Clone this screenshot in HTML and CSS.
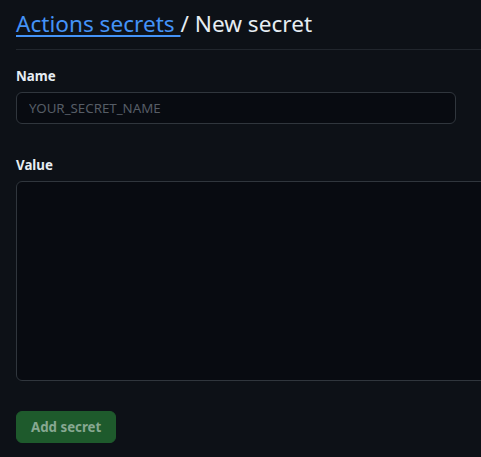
FILE: index.html
```html
<!DOCTYPE html>
<html>
<head>
<meta charset="utf-8">
<link rel="stylesheet" href="styles.css">
</head>
<body>
<div class="page">
  <div class="header">
    <h2 class="title"><a class="crumb" href="#">Actions secrets </a>/ New secret</h2>
  </div>
  <form class="form">
    <div class="field">
      <label class="label">Name</label>
      <input class="input" type="text" placeholder="YOUR_SECRET_NAME">
    </div>
    <div class="field field-value">
      <label class="label">Value</label>
      <div class="clip">
        <textarea class="textarea"></textarea>
      </div>
    </div>
    <button class="btn" type="button">Add secret</button>
  </form>
</div>
</body>
</html>
```
FILE: styles.css
```css
html, body {
  margin: 0;
  padding: 0;
  background: #0d1117;
}
body {
  font-family: "Noto Sans", "Liberation Sans", sans-serif;
  color: #e6edf3;
  width: 481px;
  height: 457px;
  overflow: hidden;
}
.page {
  padding-left: 16px;
  box-sizing: border-box;
  width: 481px;
}
.header {
  border-bottom: 1px solid #21262d;
  padding-top: 6px;
  padding-bottom: 7px;
}
.title {
  margin: 0;
  font-size: 22.6px;
  font-weight: 400;
  line-height: 36px;
  color: #e6edf3;
}
.crumb {
  color: #4493f8;
  text-decoration: underline;
  text-underline-offset: 3px;
}
.form {
  padding-top: 16px;
  display: flex;
  flex-direction: column;
  align-items: flex-start;
}
.field {
  display: flex;
  flex-direction: column;
  align-items: flex-start;
  align-self: stretch;
}
.label {
  font-size: 13.3px;
  font-weight: 700;
  line-height: 20px;
  margin-bottom: 6px;
  color: #e6edf3;
}
.input {
  box-sizing: border-box;
  width: 440px;
  height: 32px;
  background: #080b11;
  border: 1px solid #30363d;
  border-radius: 6px;
  padding: 0 12px;
  font-family: inherit;
  font-size: 13.3px;
  color: #e6edf3;
  outline: none;
}
.input::placeholder {
  color: #565d66;
}
.field-value {
  margin-top: 31px;
}
.clip {
  align-self: stretch;
  overflow: hidden;
  height: 200px;
}
.textarea {
  display: block;
  box-sizing: border-box;
  width: 520px;
  height: 200px;
  margin: 0;
  background: #080b11;
  border: 1px solid #30363d;
  border-radius: 6px;
  resize: none;
  outline: none;
  padding: 8px 12px;
}
.btn {
  margin-top: 30px;
  box-sizing: border-box;
  height: 32px;
  padding: 0 14px;
  background: #1e5a2c;
  border: 1px solid #1e5a2c;
  border-radius: 6px;
  color: #87a891;
  font-family: inherit;
  font-size: 13.3px;
  font-weight: 700;
  white-space: nowrap;
}
```
